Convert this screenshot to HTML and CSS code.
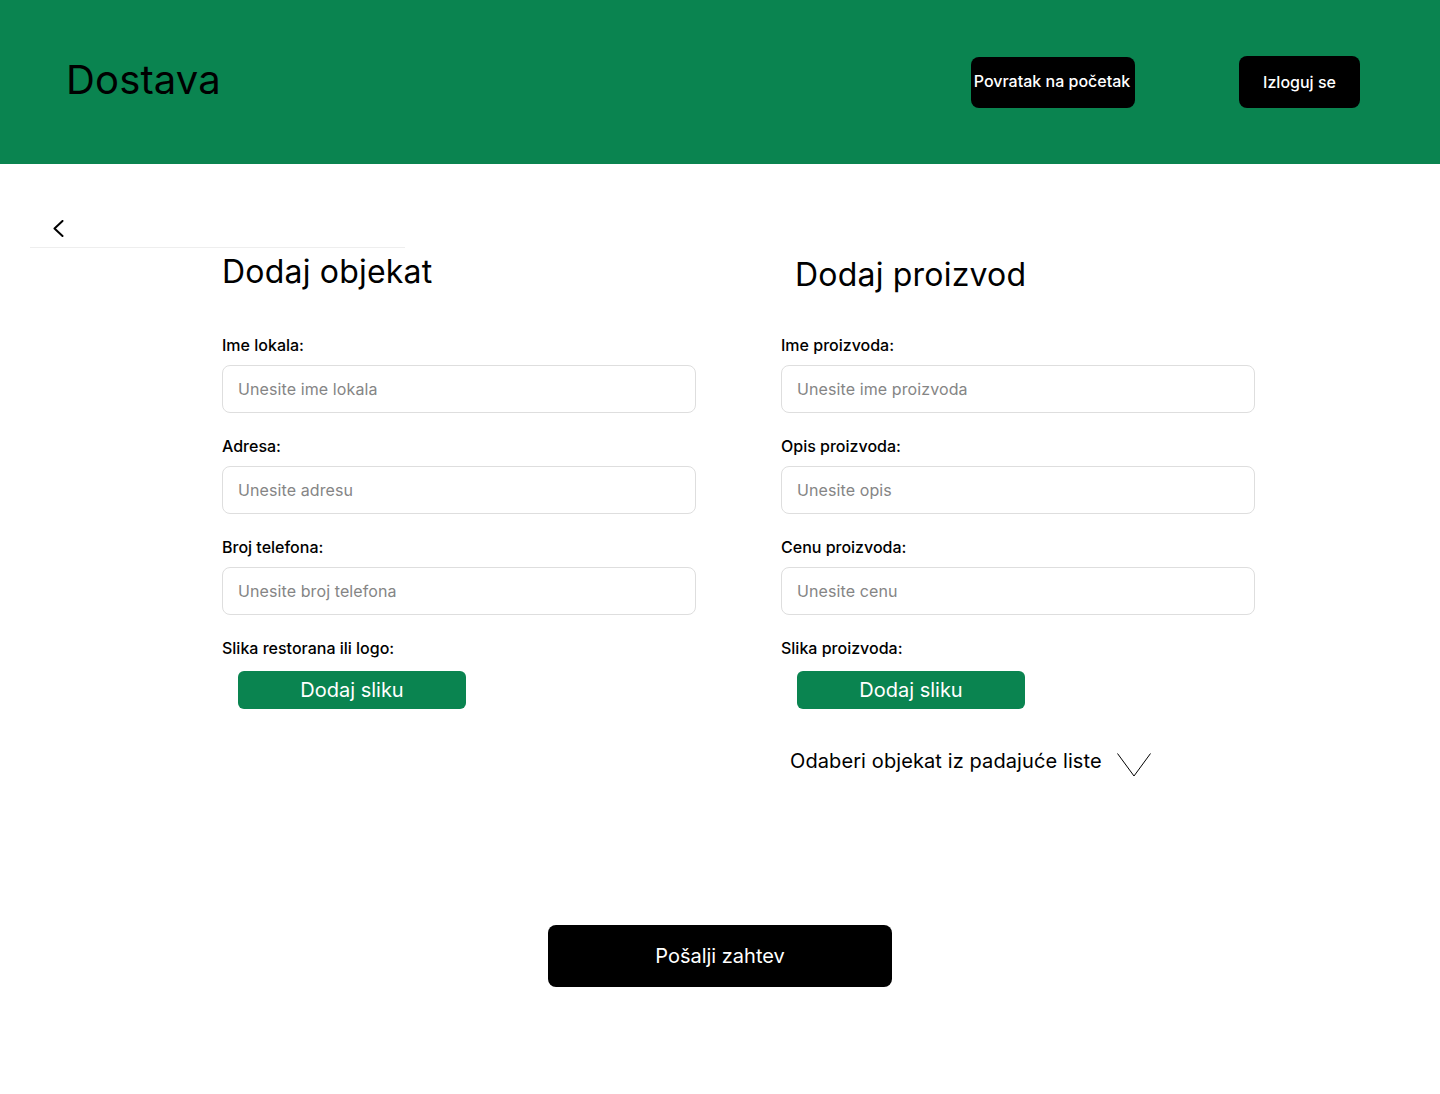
FILE: index.html
```html
<!DOCTYPE html>
<html lang="sr">
<head>
<meta charset="utf-8">
<title>Dostava</title>
<link rel="stylesheet" href="styles.css">
</head>
<body>
<header class="topbar">
  <h1 class="brand">Dostava</h1>
  <nav class="actions">
    <button class="btn-dark btn-home" type="button">Povratak na početak</button>
    <button class="btn-dark btn-logout" type="button">Izloguj se</button>
  </nav>
</header>
<main class="page">
  <div class="backbar">
    <button class="back" type="button" aria-label="Nazad">
      <svg width="12" height="17" viewBox="0 0 12 17"><path d="M10.5 1 L2.5 8.5 L10.5 16" fill="none" stroke="#000" stroke-width="2" stroke-linecap="round" stroke-linejoin="round"/></svg>
    </button>
  </div>
  <div class="columns">
    <section class="col">
      <h2 class="col-title">Dodaj objekat</h2>
      <div class="field">
        <label class="field-label">Ime lokala:</label>
        <input class="field-input" type="text" placeholder="Unesite ime lokala">
      </div>
      <div class="field">
        <label class="field-label">Adresa:</label>
        <input class="field-input" type="text" placeholder="Unesite adresu">
      </div>
      <div class="field">
        <label class="field-label">Broj telefona:</label>
        <input class="field-input" type="text" placeholder="Unesite broj telefona">
      </div>
      <div class="field field-upload">
        <label class="field-label">Slika restorana ili logo:</label>
        <button class="btn-green" type="button">Dodaj sliku</button>
      </div>
    </section>
    <section class="col col-right">
      <h2 class="col-title">Dodaj proizvod</h2>
      <div class="field">
        <label class="field-label">Ime proizvoda:</label>
        <input class="field-input" type="text" placeholder="Unesite ime proizvoda">
      </div>
      <div class="field">
        <label class="field-label">Opis proizvoda:</label>
        <input class="field-input" type="text" placeholder="Unesite opis">
      </div>
      <div class="field">
        <label class="field-label">Cenu proizvoda:</label>
        <input class="field-input" type="text" placeholder="Unesite cenu">
      </div>
      <div class="field field-upload">
        <label class="field-label">Slika proizvoda:</label>
        <button class="btn-green" type="button">Dodaj sliku</button>
      </div>
      <div class="dropdown">
        <span class="dropdown-text">Odaberi objekat iz padajuće liste</span>
        <svg class="dropdown-icon" width="34" height="24" viewBox="0 0 34 24"><path d="M0.5 0.5 L17 23 L33.5 0.5" fill="none" stroke="#000" stroke-width="1"/></svg>
      </div>
    </section>
  </div>
  <div class="submit-row">
    <button class="btn-submit" type="button">Pošalji zahtev</button>
  </div>
</main>
</body>
</html>
```
FILE: styles.css
```css
* { box-sizing: border-box; }

html, body {
  margin: 0;
  padding: 0;
  background: #ffffff;
  font-family: Inter, "Noto Sans", sans-serif;
  color: #000;
}

.topbar {
  height: 164px;
  background: #0a8450;
  display: flex;
  align-items: center;
  padding: 0 80px 0 66px;
}

.brand {
  margin: 0 0 5px;
  font-size: 40px;
  font-weight: 400;
  line-height: 48px;
  letter-spacing: 0.15px;
  color: #000;
}

.actions {
  margin-left: auto;
  display: flex;
  align-items: center;
  gap: 104px;
}

.btn-dark {
  background: #000;
  color: #fff;
  border: none;
  border-radius: 8px;
  font-family: inherit;
  font-size: 16px;
  font-weight: 500;
  padding: 0;
  cursor: pointer;
}

.btn-home {
  width: 164px;
  height: 51px;
  padding: 0 2px 3px 0;
  margin-top: 1px;
}

.btn-logout {
  width: 121px;
  height: 52px;
}

.page {
  display: flex;
  flex-direction: column;
}

.backbar {
  margin-left: 30px;
  width: 375px;
  padding: 56px 0 10px 22px;
  border-bottom: 1px solid #eeeeee;
}

.back {
  display: block;
  background: none;
  border: none;
  padding: 0;
  width: 12px;
  height: 17px;
  cursor: pointer;
}

.back svg { display: block; }

.columns {
  display: grid;
  grid-template-columns: 474px 474px;
  column-gap: 85px;
  padding: 4px 0 0 222px;
  align-items: start;
}

.col-title {
  margin: 0 0 44px;
  font-size: 32px;
  font-weight: 400;
  line-height: 39px;
  letter-spacing: 0.2px;
}

.col-right .col-title {
  padding: 3px 0 0 14px;
  margin-bottom: 41px;
}

.field {
  display: flex;
  flex-direction: column;
  margin-bottom: 23px;
}

.field-upload { margin-bottom: 0; }

.field-label {
  font-size: 16px;
  font-weight: 500;
  line-height: 20px;
  margin-bottom: 10px;
}

.field-upload .field-label { margin-bottom: 13px; }

.field-input {
  width: 474px;
  height: 48px;
  border: 1px solid #dedede;
  border-radius: 8px;
  padding: 0 15px;
  font-family: inherit;
  font-size: 16px;
  letter-spacing: 0.1px;
  color: #000;
  background: #fff;
  outline: none;
}

.field-input::placeholder {
  color: #858585;
}

.btn-green {
  margin-left: 16px;
  width: 228px;
  height: 38px;
  background: #0a8450;
  color: #fff;
  border: none;
  border-radius: 6px;
  font-family: inherit;
  font-size: 20px;
  font-weight: 400;
  padding: 0;
  cursor: pointer;
}

.dropdown {
  display: flex;
  align-items: flex-start;
  margin-top: 40px;
  padding-left: 9px;
}

.dropdown-text {
  font-size: 20px;
  line-height: 24px;
  font-weight: 400;
  letter-spacing: 0.1px;
}

.dropdown-icon {
  display: block;
  margin: 4px 0 0 15px;
}

.submit-row {
  display: flex;
  justify-content: center;
  margin-top: 148px;
  padding-bottom: 107px;
}

.btn-submit {
  width: 344px;
  height: 62px;
  background: #000;
  color: #fff;
  border: none;
  border-radius: 8px;
  font-family: inherit;
  font-size: 20px;
  font-weight: 400;
  cursor: pointer;
}
```
